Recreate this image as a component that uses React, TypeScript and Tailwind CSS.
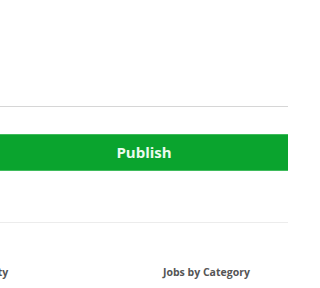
const App = () => {
  return (
    <div className="w-[288px] h-[288px] overflow-hidden bg-white font-['Open_Sans',sans-serif]">
      <div className="h-[106px]" />
      <div className="h-px bg-[#d6d6d6]" />
      <div className="h-[27px]" />
      <button className="w-full h-[37px] flex items-center justify-center bg-[#0aa42e] border-y border-[#3fbb5c] text-[#ecfbee] text-[15px] font-bold">
        Publish
      </button>
      <div className="h-[51px]" />
      <div className="h-px bg-[#ececec]" />
      <div className="flex items-center h-[66px] pt-[34px] text-[10.5px] font-bold text-[#555]">
        <div className="ml-[-52px] w-[215px] shrink-0">Jobs by City</div>
        <div>Jobs by Category</div>
      </div>
    </div>
  );
};

export default App;
